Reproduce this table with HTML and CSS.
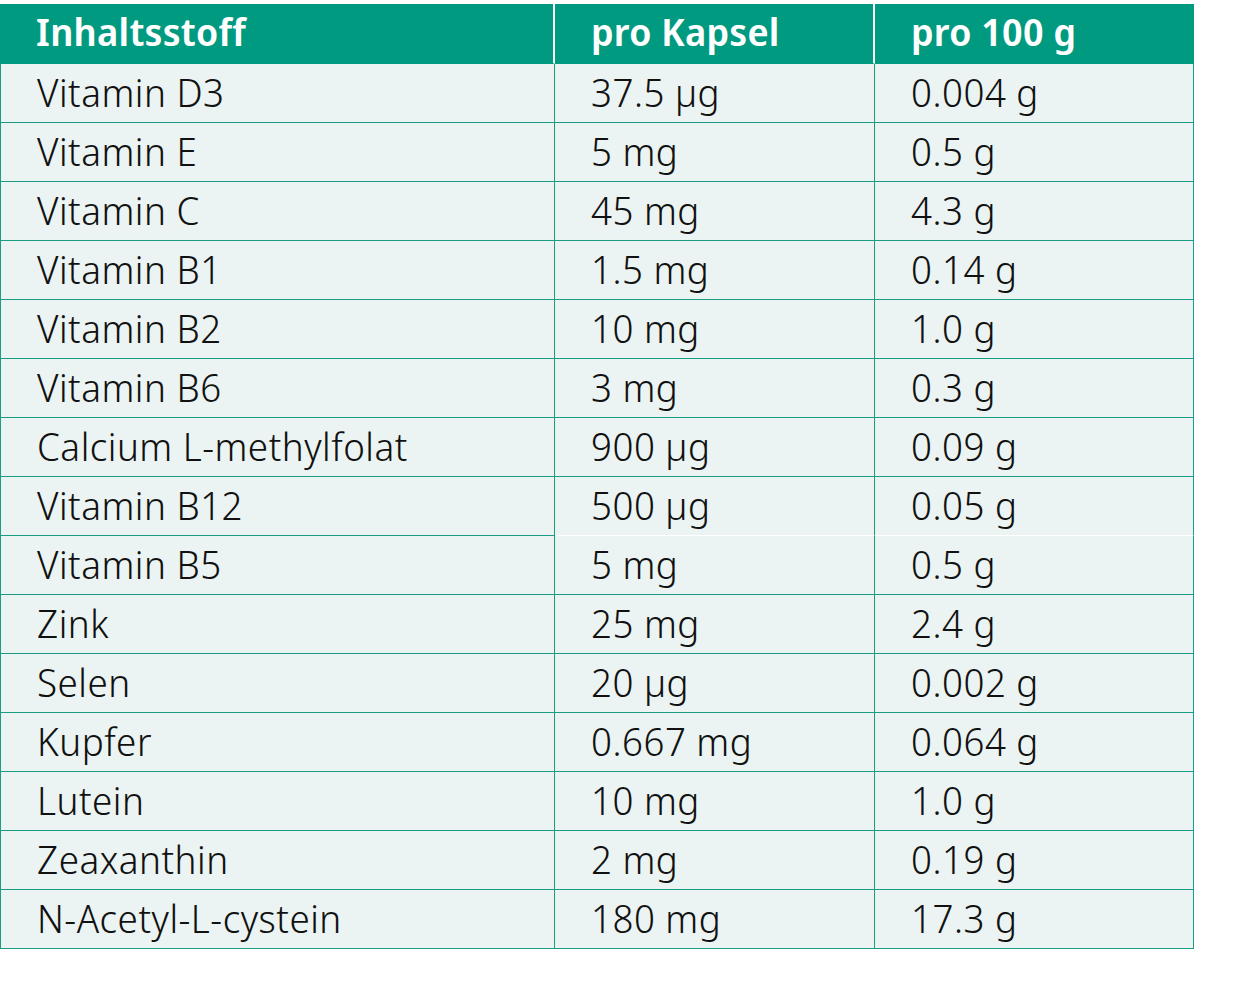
FILE: index.html
```html
<!DOCTYPE html>
<html lang="de">
<head>
<meta charset="utf-8">
<title>Inhaltsstoffe</title>
<link rel="stylesheet" href="styles.css">
</head>
<body>
<div class="tbl">
  <div class="hd">Inhaltsstoff</div>
  <div class="hd">pro Kapsel</div>
  <div class="hd hd-last">pro 100 g</div>

  <div class="c c1">Vitamin D3</div><div class="c c2">37.5 µg</div><div class="c c3">0.004 g</div>
  <div class="c c1">Vitamin E</div><div class="c c2">5 mg</div><div class="c c3">0.5 g</div>
  <div class="c c1">Vitamin C</div><div class="c c2">45 mg</div><div class="c c3">4.3 g</div>
  <div class="c c1">Vitamin B1</div><div class="c c2">1.5 mg</div><div class="c c3">0.14 g</div>
  <div class="c c1">Vitamin B2</div><div class="c c2">10 mg</div><div class="c c3">1.0 g</div>
  <div class="c c1">Vitamin B6</div><div class="c c2">3 mg</div><div class="c c3">0.3 g</div>
  <div class="c c1">Calcium L-methylfolat</div><div class="c c2">900 µg</div><div class="c c3">0.09 g</div>
  <div class="c c1">Vitamin B12</div><div class="c c2 white-b">500 µg</div><div class="c c3 white-b">0.05 g</div>
  <div class="c c1">Vitamin B5</div><div class="c c2">5 mg</div><div class="c c3">0.5 g</div>
  <div class="c c1">Zink</div><div class="c c2">25 mg</div><div class="c c3">2.4 g</div>
  <div class="c c1">Selen</div><div class="c c2">20 µg</div><div class="c c3">0.002 g</div>
  <div class="c c1">Kupfer</div><div class="c c2">0.667 mg</div><div class="c c3">0.064 g</div>
  <div class="c c1">Lutein</div><div class="c c2">10 mg</div><div class="c c3">1.0 g</div>
  <div class="c c1">Zeaxanthin</div><div class="c c2">2 mg</div><div class="c c3">0.19 g</div>
  <div class="c c1">N-Acetyl-L-cystein</div><div class="c c2">180 mg</div><div class="c c3">17.3 g</div>
</div>
</body>
</html>
```
FILE: styles.css
```css
html, body {
  margin: 0;
  padding: 0;
  background: #ffffff;
}
body {
  padding-top: 4px;
  font-family: "Noto Sans Display", "Noto Sans", sans-serif;
  color: #111111;
}
.tbl {
  display: grid;
  grid-template-columns: 555px 320px 319px;
  grid-template-rows: 60px;
  grid-auto-rows: 59px;
  width: 1194px;
}
.hd {
  background: #009a80;
  color: #ffffff;
  font-weight: 580;
  font-size: 38px;
  letter-spacing: 0.3px;
  display: flex;
  align-items: center;
  padding: 0 0 5px 36px;
  border-right: 2px solid #ffffff;
  border-bottom: 1px solid #009a80;
  box-sizing: border-box;
}
.hd-last {
  border-right: 1px solid #009a80;
}
.c {
  background: #ebf4f2;
  font-size: 39px;
  font-weight: 350;
  letter-spacing: 0.5px;
  display: flex;
  align-items: center;
  padding: 0 0 3px 36px;
  box-sizing: border-box;
  border-bottom: 1px solid #1a9c85;
  border-right: 1px solid #1a9c85;
  white-space: nowrap;
}
.c1 {
  border-left: 1px solid #1a9c85;
}
.white-b {
  border-bottom-color: #ffffff;
}
```
